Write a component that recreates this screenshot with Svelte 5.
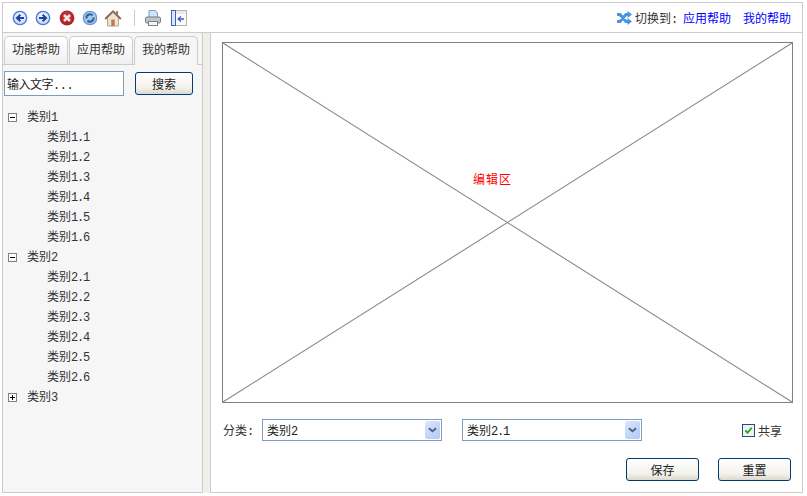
<script>
  const groups = [
    { name: '类别', num: '1', open: true, items: ['1.1', '1.2', '1.3', '1.4', '1.5', '1.6'] },
    { name: '类别', num: '2', open: true, items: ['2.1', '2.2', '2.3', '2.4', '2.5', '2.6'] },
    { name: '类别', num: '3', open: false, items: [] }
  ];
  const tabs = ['功能帮助', '应用帮助', '我的帮助'];
</script>

<div class="page">
  <div class="frame">
    <header class="toolbar">
      <div class="tools">
        <svg class="ico" viewBox="0 0 16 16">
          <defs>
            <radialGradient id="disc" cx="0.5" cy="0.4" r="0.6"><stop offset="0" stop-color="#fff"/><stop offset="1" stop-color="#c4d4f8"/></radialGradient>
          </defs>
          <circle cx="8" cy="8" r="6.7" fill="url(#disc)" stroke="#4a78e0" stroke-width="1.3"/>
          <path d="M12 8H6M8.4 4.8 5 8l3.4 3.2" fill="none" stroke="#23409c" stroke-width="2.1"/>
        </svg>
        <svg class="ico" viewBox="0 0 16 16">
          <circle cx="8" cy="8" r="6.7" fill="url(#disc)" stroke="#4a78e0" stroke-width="1.3"/>
          <path d="M4 8h6M7.6 4.8 11 8l-3.4 3.2" fill="none" stroke="#23409c" stroke-width="2.1"/>
        </svg>
        <svg class="ico" viewBox="0 0 16 16">
          <circle cx="8" cy="8" r="7.4" fill="#b0242c"/>
          <circle cx="8" cy="6.5" r="5" fill="#cc4048" opacity="0.5"/>
          <path d="m5 5 6 6M11 5l-6 6" stroke="#f4e4e4" stroke-width="2.6"/>
        </svg>
        <svg class="ico" viewBox="0 0 16 16">
          <circle cx="8" cy="8" r="6.7" fill="#a9c6ee" stroke="#6f97dc" stroke-width="1.3"/>
          <path d="M4.5 8.5a3.5 3.5 0 0 1 6-3M11.5 7.5a3.5 3.5 0 0 1-6 3" fill="none" stroke="#1f6a8c" stroke-width="2"/>
        </svg>
        <svg class="ico home" viewBox="0 0 18 18">
          <path d="M3.5 8.5V17H14.5V8.5L9 3.5Z" fill="#efe4d2" stroke="#b3a796"/>
          <path d="M1.2 10 9 2.2 16.8 10" fill="none" stroke="#8a6552" stroke-width="1.8"/>
          <rect x="12" y="2" width="2" height="4" fill="#9a7a68"/>
          <rect x="7.3" y="10.5" width="3.4" height="6.5" fill="#c07a48"/>
        </svg>
        <span class="sep"></span>
        <svg class="ico print" viewBox="0 0 18 18">
          <path d="M5 1.5h6.5L13.5 4v5H5Z" fill="#cfe2f8" stroke="#7aa0d0"/>
          <rect x="1.5" y="8" width="15" height="6" rx="1.5" fill="#c2c6cb" stroke="#77797d"/>
          <rect x="4.5" y="12.5" width="9" height="4" fill="#f4f4f4" stroke="#808080"/>
        </svg>
        <svg class="ico outdent" viewBox="0 0 16 16">
          <rect x="0.5" y="0.5" width="15" height="15" fill="#ecebe4" stroke="#b4b4aa"/>
          <rect x="5" y="4" width="10" height="11" fill="#f8fafd"/>
          <rect x="0.5" y="0.5" width="4" height="15" fill="#dfe8f8" stroke="#3a62c8"/>
          <path d="M13 9H7.5M10 6.4 7 9l3 2.6" fill="none" stroke="#3a62c8" stroke-width="1.3"/>
        </svg>
      </div>
      <div class="switch">
        <svg class="swap" viewBox="0 0 16 14">
          <path d="M1 3.5h3l6 7h2.5M1 10.5h3l6-7h2.5" fill="none" stroke="#4a94de" stroke-width="3"/>
          <path d="M11.5 0 16 3.5 11.5 7ZM11.5 7l4.5 3.5L11.5 14Z" fill="#4a94de"/>
        </svg>
        <span class="lead">切换到<span class="num">:</span></span>
        <a href="#a">应用帮助</a>
        <a href="#b">我的帮助</a>
      </div>
    </header>

    <div class="body">
      <aside class="side">
        <div class="tabs">
          {#each tabs as tab, i}
            <div class="tab" class:active={i === 2}>{tab}</div>
          {/each}
        </div>
        <div class="search">
          <input class="search-input" value="输入文字..." />
          <button class="btn search-btn">搜索</button>
        </div>
        <ul class="tree">
          {#each groups as g}
            <li class="row">
              <span class="toggle">
                <span class="dash"></span>
                {#if !g.open}<span class="bar"></span>{/if}
              </span>
              {g.name}<span class="num">{g.num}</span>
            </li>
            {#each g.items as item}
              <li class="row leaf">{g.name}<span class="num">{item}</span></li>
            {/each}
          {/each}
        </ul>
      </aside>

      <div class="gutter"></div>

      <main class="main">
        <div class="canvas">
          <svg class="cross" viewBox="0 0 570 360" preserveAspectRatio="none">
            <path d="M0 0 570 360M570 0 0 360" stroke="#8a8a8a" stroke-width="1.1" fill="none" vector-effect="non-scaling-stroke"/>
          </svg>
          <span class="canvas-label">编辑区</span>
        </div>

        <div class="fields">
          <span class="field-label">分类<span class="num">:</span></span>
          <div class="select">
            <span>类别<span class="num">2</span></span>
            <span class="arrow"><svg viewBox="0 0 10 6"><path d="M1 1l4 3.4L9 1" fill="none" stroke="#4d6185" stroke-width="2"/></svg></span>
          </div>
          <div class="select second">
            <span>类别<span class="num">2.1</span></span>
            <span class="arrow"><svg viewBox="0 0 10 6"><path d="M1 1l4 3.4L9 1" fill="none" stroke="#4d6185" stroke-width="2"/></svg></span>
          </div>
          <label class="share">
            <span class="check"><svg viewBox="0 0 10 10"><path d="M1.5 5 4 7.5 8.5 2" fill="none" stroke="#21a121" stroke-width="2"/></svg></span>
            共享
          </label>
        </div>

        <div class="actions">
          <button class="btn">保存</button>
          <button class="btn">重置</button>
        </div>
      </main>
    </div>
  </div>
</div>

<style>
  :global(body) {
    margin: 0;
  }

  .page {
    width: 807px;
    height: 496px;
    padding: 2px 4px 3px 2px;
    box-sizing: border-box;
    background: #fff;
    font-family: "Liberation Sans", "Noto Sans CJK SC", sans-serif;
    font-size: 12px;
    color: #333;
  }

  .num {
    font-family: "Liberation Mono", monospace;
    letter-spacing: -1.2px;
  }

  .frame {
    height: 100%;
    display: flex;
    flex-direction: column;
    box-sizing: border-box;
    border: 1px solid #ccc;
    border-bottom: 0;
  }

  .toolbar {
    flex: 0 0 29px;
    display: flex;
    align-items: center;
    justify-content: space-between;
    padding: 0 11px 0 9px;
    border-bottom: 1px solid #ccc;
    background: #fff;
  }

  .tools {
    display: flex;
    align-items: center;
    gap: 7.3px;
  }

  .ico {
    width: 16px;
    height: 16px;
    display: block;
  }

  .home {
    width: 18px;
    height: 18px;
    margin-left: -1px;
  }

  .sep {
    width: 1px;
    height: 16px;
    background: #ccc;
    margin: 0 1px 0 5px;
  }

  .print {
    width: 18px;
    height: 18px;
  }

  .outdent {
    margin-left: 2px;
  }

  .switch {
    display: flex;
    align-items: center;
  }

  .swap {
    width: 16px;
    height: 14px;
    margin-right: 3px;
  }

  .lead {
    margin-right: 6px;
  }

  .switch a {
    color: #00f;
    text-decoration: none;
  }

  .switch a + a {
    margin-left: 12px;
  }

  .body {
    flex: 1;
    display: flex;
    min-height: 0;
  }

  .side {
    width: 200px;
    box-sizing: border-box;
    background: #f6f6f6;
    border-right: 1px solid #ccc;
    border-bottom: 1px solid #ccc;
  }

  .tabs {
    display: flex;
    gap: 1px;
    height: 32px;
    padding: 3px 0 0 1px;
    box-sizing: border-box;
    border-bottom: 1px solid #ccc;
  }

  .tab {
    width: 64px;
    box-sizing: border-box;
    height: 28px;
    border: 1px solid #ccc;
    border-bottom: 0;
    border-radius: 5px 5px 0 0;
    background: linear-gradient(#fff, #f0f0f0);
    text-align: center;
    line-height: 27px;
  }

  .tab.active {
    height: 29px;
    background: #f6f6f6;
  }

  .search {
    display: flex;
    align-items: center;
    justify-content: space-between;
    padding: 6px 9px 0 1px;
  }

  .search-input {
    width: 120px;
    height: 25px;
    box-sizing: border-box;
    padding: 0 2px;
    border: 1px solid #7f9db9;
    background: #fff;
    font-family: "Liberation Mono", "Noto Sans CJK SC", monospace;
    font-size: 12px;
    letter-spacing: -0.5px;
    color: #222;
    outline: none;
  }

  .btn {
    width: 73px;
    height: 23px;
    box-sizing: border-box;
    padding: 0;
    border: 1px solid #003c74;
    border-radius: 3px;
    background: linear-gradient(#fff, #f3f2ec 70%, #dcd8ce);
    font: inherit;
    color: #222;
  }

  .search-btn {
    width: 58px;
  }

  .tree {
    list-style: none;
    margin: 11px 0 0;
    padding: 0;
  }

  .row {
    height: 20px;
    line-height: 20px;
    padding-left: 24px;
    position: relative;
    color: #333;
  }

  .leaf {
    padding-left: 44px;
  }

  .toggle {
    position: absolute;
    left: 5px;
    top: 6px;
    width: 9px;
    height: 9px;
    box-sizing: border-box;
    border: 1px solid #808080;
    background: #fff;
  }

  .dash {
    position: absolute;
    left: 1px;
    top: 3px;
    width: 5px;
    height: 1px;
    background: #000;
  }

  .bar {
    position: absolute;
    left: 3px;
    top: 1px;
    width: 1px;
    height: 5px;
    background: #000;
  }

  .gutter {
    width: 7px;
    background: #f1efea;
  }

  .main {
    flex: 1;
    min-width: 0;
    box-sizing: border-box;
    padding: 9px 9px 0 11px;
    background: #fff;
    border-left: 1px solid #ccc;
    border-bottom: 1px solid #ccc;
    display: flex;
    flex-direction: column;
  }

  .canvas {
    position: relative;
    flex: 0 0 361px;
    box-sizing: border-box;
    border: 1px solid #808080;
  }

  .cross {
    position: absolute;
    inset: 0;
    width: 100%;
    height: 100%;
  }

  .canvas-label {
    position: absolute;
    left: 250px;
    top: 127px;
    color: #f00;
    letter-spacing: 1px;
  }

  .fields {
    display: flex;
    align-items: center;
    margin-top: 16px;
    height: 22px;
    color: #333;
  }

  .field-label {
    width: 40px;
    box-sizing: border-box;
    padding-left: 1px;
  }

  .select {
    display: flex;
    align-items: center;
    justify-content: space-between;
    box-sizing: border-box;
    width: 180px;
    height: 22px;
    padding: 0 1px 0 4px;
    border: 1px solid #7f9db9;
    background: #fff;
    color: #222;
  }

  .second {
    margin-left: 20px;
  }

  .arrow {
    display: flex;
    align-items: center;
    justify-content: center;
    width: 15px;
    height: 18px;
    border-radius: 2px;
    background: linear-gradient(135deg, #dbe6fd, #b2c8f6);
  }

  .arrow svg {
    width: 9px;
    height: 6px;
  }

  .share {
    display: flex;
    align-items: center;
    gap: 3px;
    margin-left: auto;
    margin-right: 11px;
  }

  .check {
    width: 13px;
    height: 13px;
    box-sizing: border-box;
    border: 1px solid #1c5180;
    background: #f2f2ee;
    display: flex;
    align-items: center;
    justify-content: center;
  }

  .check svg {
    width: 9px;
    height: 9px;
  }

  .actions {
    display: flex;
    justify-content: flex-end;
    gap: 19px;
    margin-top: 17px;
    padding-right: 2px;
  }
</style>
